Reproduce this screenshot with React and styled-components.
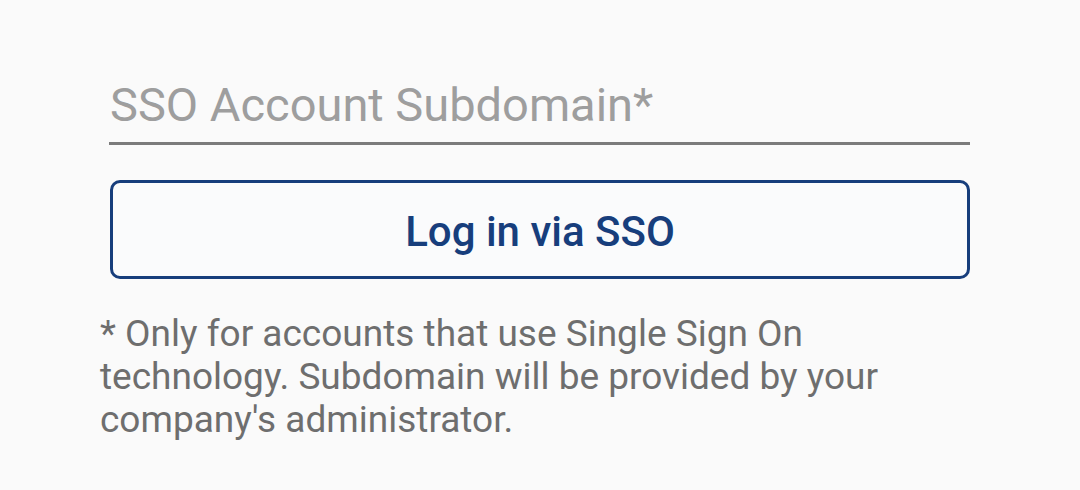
import React from "react";
import styled, { createGlobalStyle } from "styled-components";

const GlobalStyle = createGlobalStyle`
  html, body {
    margin: 0;
    padding: 0;
    background: #fafafa;
    font-family: Roboto, "Liberation Sans", sans-serif;
  }
`;

const App = () => {
  return (
    <>
      <GlobalStyle />
      <StyledPage>
        <StyledField>
          <StyledInput placeholder="SSO Account Subdomain*" />
        </StyledField>
        <StyledButton type="button">Log in via SSO</StyledButton>
        <StyledNote>
          * Only for accounts that use Single Sign On technology. Subdomain will
          be provided by your company's administrator.
        </StyledNote>
      </StyledPage>
    </>
  );
};

export default App;

const StyledPage = styled.main`
  display: flex;
  flex-direction: column;
  width: 880px;
  padding: 72px 0 0 100px;
`;

const StyledField = styled.div`
  margin: 0 10px 0 9px;
  border-bottom: 3px solid #7b7b7b;
`;

const StyledInput = styled.input`
  width: 100%;
  box-sizing: border-box;
  border: none;
  outline: none;
  background: transparent;
  padding: 0 0 4px 1px;
  font-family: Roboto, "Liberation Sans", sans-serif;
  font-size: 47px;
  line-height: 66px;
  color: #333;

  &::placeholder {
    color: #9e9e9e;
  }
`;

const StyledButton = styled.button`
  margin: 35px 10px 0 10px;
  height: 99px;
  padding: 4px 0 0 0;
  border: 3px solid #173e7c;
  border-radius: 10px;
  background: #fafbfc;
  color: #173e7c;
  font-family: Roboto, "Liberation Sans", sans-serif;
  font-weight: 500;
  font-size: 42px;
  cursor: pointer;
`;

const StyledNote = styled.p`
  margin: 33px 0 0 0;
  max-width: 840px;
  font-size: 37px;
  line-height: 43px;
  color: #6e6e6e;
`;
